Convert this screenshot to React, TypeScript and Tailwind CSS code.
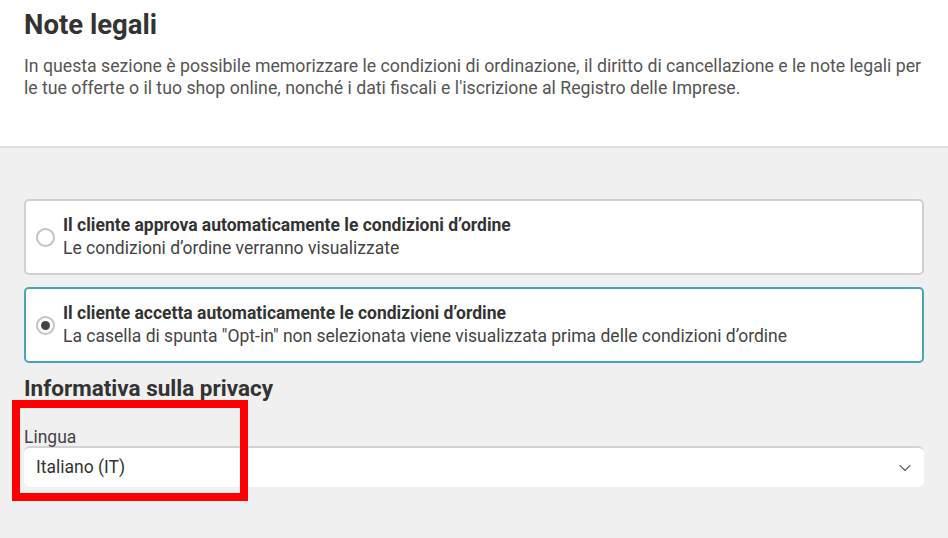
import React from "react";
import { ChevronDown } from "lucide-react";

const options = [
  {
    id: "approve",
    title: "Il cliente approva automaticamente le condizioni d’ordine",
    text: "Le condizioni d’ordine verranno visualizzate",
  },
  {
    id: "accept",
    title: "Il cliente accetta automaticamente le condizioni d’ordine",
    text: 'La casella di spunta "Opt-in" non selezionata viene visualizzata prima delle condizioni d’ordine',
  },
];

const Radio = ({ checked }: { checked: boolean }) => (
  <span className="mt-[1px] flex h-[19px] w-[19px] shrink-0 items-center justify-center rounded-full border-2 border-[#c4c4c4] bg-white">
    {checked && <span className="h-[9px] w-[9px] rounded-full bg-[#444]" />}
  </span>
);

const App = () => {
  const [selected, setSelected] = React.useState("accept");

  return (
    <div className="min-h-[538px] bg-[#f0f0f0] font-['Roboto',sans-serif] text-[#333]">
      <div className="border-b-2 border-[#dddddd] bg-white px-6 pb-[47px] pt-[7px]">
        <h1 className="text-[27.5px] font-bold leading-[36px] text-[#333]">Note legali</h1>
        <p className="mt-[12px] text-[17.7px] leading-[22px] text-[#555]">
          In questa sezione è possibile memorizzare le condizioni di ordinazione, il diritto di cancellazione e le note legali per
          <br />
          le tue offerte o il tuo shop online, nonché i dati fiscali e l'iscrizione al Registro delle Imprese.
        </p>
      </div>

      <div className="px-6 pt-[51px]">
        <div className="flex flex-col gap-[12px]">
          {options.map((o) => {
            const active = selected === o.id;
            return (
              <button
                key={o.id}
                onClick={() => setSelected(o.id)}
                className={
                  active
                    ? "flex h-[76px] items-center gap-[8px] rounded-[5px] border-2 border-[#4aa5b2] bg-white px-[10px] text-left"
                    : "flex h-[76px] items-center gap-[8px] rounded-[5px] border-2 border-[#d0d0d0] bg-white px-[10px] text-left"
                }
              >
                <Radio checked={active} />
                <span className="flex flex-col">
                  <span className="text-[17.5px] font-bold leading-[23px] text-[#333]">{o.title}</span>
                  <span className="text-[17.5px] leading-[23px] text-[#444]">{o.text}</span>
                </span>
              </button>
            );
          })}
        </div>

        <h2 className="mt-[10px] text-[22.5px] font-bold leading-[30px] text-[#333]">Informativa sulla privacy</h2>

        <div className="relative mt-[25px]">
          <label className="block text-[17.5px] leading-[18px] text-[#444]">Lingua</label>
          <div className="flex h-[41px] items-center justify-between rounded-[6px] border-t-2 border-[#d2d2d2] bg-white pl-3 pr-[9px]">
            <span className="text-[17.5px] text-[#333]">Italiano (IT)</span>
            <ChevronDown size={20} strokeWidth={1.4} className="text-[#666]" />
          </div>
          <div className="pointer-events-none absolute left-[-12px] top-[-28px] h-[101px] w-[236px] border-[8px] border-[#ff0000]" />
        </div>
      </div>
    </div>
  );
};

export default App;
